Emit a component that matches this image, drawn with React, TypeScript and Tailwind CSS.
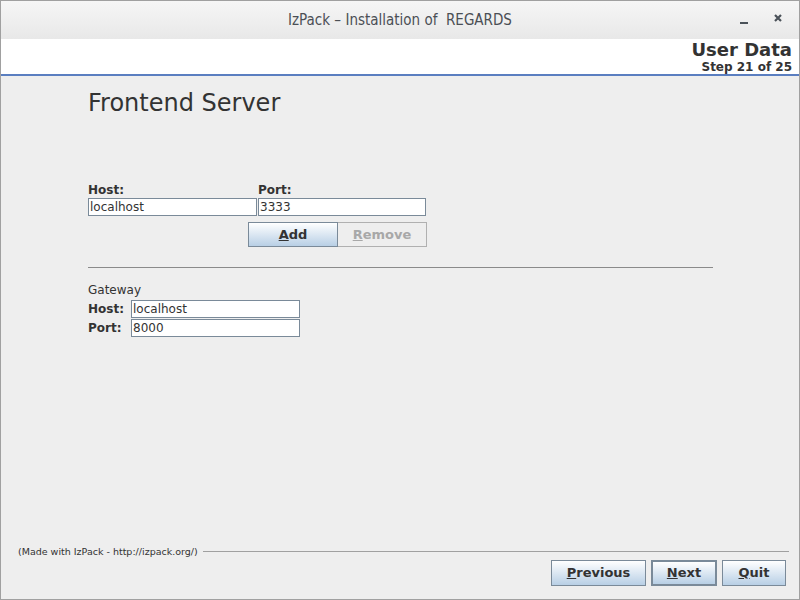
import React from "react";

const btn =
  "flex items-center justify-center border border-[#7a8a99] bg-gradient-to-b from-[#ffffff] to-[#b8cfe5] text-[13px] font-bold text-[#333333]";

function Field({ value, w }: { value: string; w: string }) {
  return (
    <div className={`h-[18px] ${w} border border-[#7a8a99] bg-white px-[1px] text-[12px] leading-[16px] text-[#333]`}>
      {value}
    </div>
  );
}

export default function App() {
  return (
    <div
      className="w-[800px] h-[600px] bg-[#eeeeee] border border-[#a0a0a0] flex flex-col overflow-hidden text-[#333333]"
      style={{ fontFamily: '"DejaVu Sans", sans-serif' }}
    >
      {/* Title bar */}
      <div className="relative h-[38px] shrink-0 bg-gradient-to-b from-[#f6f6f6] to-[#e8e8e8] flex items-center justify-center">
        <span
          className="text-[15px] text-[#4b4f55]"
          style={{ fontFamily: '"DejaVu Sans Condensed", "DejaVu Sans", sans-serif', fontStretch: "condensed" }}
        >
          IzPack – Installation of&nbsp; REGARDS
        </span>
        <div className="absolute right-[16px] top-[11px] flex items-center gap-[25px] text-[#4b5259]">
          <div className="w-[8px] h-[2px] bg-[#4b5259] mt-[10px]" />
          <svg width="10" height="10" viewBox="0 0 10 10">
            <path d="M2 2 L8 8 M8 2 L2 8" stroke="#4b5259" strokeWidth="2.2" />
          </svg>
        </div>
      </div>

      {/* Header */}
      <div className="h-[37px] shrink-0 bg-white border-b-2 border-[#5a7ec0] flex flex-col items-end pr-[7px] pt-[1px]">
        <div className="text-[18px] font-bold leading-[20px]">User Data</div>
        <div className="text-[12px] font-bold leading-[15px]">Step 21 of 25</div>
      </div>

      {/* Content */}
      <div className="flex-1 pl-[87px] pt-[14px]">
        <div className="text-[24px] leading-[26px]">Frontend Server</div>

        <div className="mt-[67px] flex gap-[1px]">
          <div className="flex flex-col">
            <div className="text-[12px] font-bold leading-[15px]">Host:</div>
            <Field value="localhost" w="w-[169px]" />
          </div>
          <div className="flex flex-col">
            <div className="text-[12px] font-bold leading-[15px]">Port:</div>
            <Field value="3333" w="w-[168px]" />
          </div>
        </div>
        <div className="mt-[6px] ml-[160px] flex">
          <div className={`${btn} w-[90px] h-[25px]`}>
            <span><u>A</u>dd</span>
          </div>
          <div className="w-[89px] h-[25px] border border-[#b0b0b0] border-l-0 bg-[#eeeeee] flex items-center justify-center text-[13px] font-bold text-[#a8a8a8]">
            <span><u>R</u>emove</span>
          </div>
        </div>

        <div className="mt-[20px] w-[625px] h-[1px] bg-[#8a8a8a]" />

        <div className="mt-[15px] text-[12px] leading-[15px]">Gateway</div>
        <div className="mt-[2px] flex items-center gap-[5px]">
          <div className="w-[38px] text-[12px] font-bold">Host:</div>
          <Field value="localhost" w="w-[169px]" />
        </div>
        <div className="mt-[1px] flex items-center gap-[5px]">
          <div className="w-[38px] text-[12px] font-bold">Port:</div>
          <Field value="8000" w="w-[169px]" />
        </div>
      </div>

      {/* Footer */}
      <div className="shrink-0 flex flex-col pb-[13px]">
        <div className="flex items-center pl-[17px] pr-[10px]">
          <span className="text-[9.5px] leading-[12px] text-[#333]">(Made with IzPack - http://izpack.org/)</span>
          <div className="flex-1 h-[1px] bg-[#a0a0a0] ml-[5px] -mt-[2px]" />
        </div>
        <div className="flex justify-end gap-[5px] pr-[13px] mt-[2px]">
          <div className={`${btn} w-[95px] h-[26px]`}>
            <span><u>P</u>revious</span>
          </div>
          <div className={`${btn} w-[66px] h-[26px] border-2`}>
            <span><u>N</u>ext</span>
          </div>
          <div className={`${btn} w-[64px] h-[26px]`}>
            <span><u>Q</u>uit</span>
          </div>
        </div>
      </div>
    </div>
  );
}
